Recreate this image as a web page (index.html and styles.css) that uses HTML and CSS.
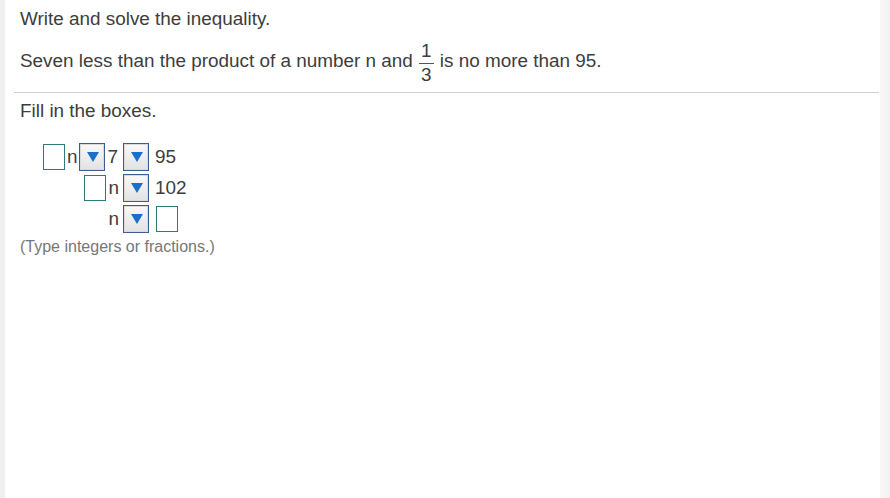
FILE: index.html
```html
<!DOCTYPE html>
<html>
<head>
<meta charset="utf-8">
<link rel="stylesheet" href="styles.css">
</head>
<body>
<div class="page">
  <div class="content">
    <p class="line first">Write and solve the inequality.</p>
    <p class="line second">Seven less than the product of a number n and <span class="frac"><span class="num">1</span><span class="den">3</span></span> is no more than 95.</p>
    <hr class="rule">
    <p class="line fill">Fill in the boxes.</p>
    <div class="grid">
      <div class="left"><span class="box"></span><span class="var">n</span><span class="dd first-dd"><span class="tri"></span></span><span class="num7">7</span></div>
      <div class="mid"><span class="dd"><span class="tri"></span></span></div>
      <div class="right">95</div>

      <div class="left"><span class="box"></span><span class="var">n</span></div>
      <div class="mid"><span class="dd"><span class="tri"></span></span></div>
      <div class="right">102</div>

      <div class="left"><span class="var">n</span></div>
      <div class="mid"><span class="dd"><span class="tri"></span></span></div>
      <div class="right"><span class="box"></span></div>
    </div>
    <p class="hint">(Type integers or fractions.)</p>
  </div>
  <div class="sidebar"></div>
</div>
</body>
</html>
```

FILE: styles.css
```css
html, body {
  margin: 0;
  padding: 0;
  background: #fff;
}
body {
  font-family: "Liberation Sans", Arial, sans-serif;
  color: #3d3d3d;
  font-size: 18.9px;
}
.page {
  display: flex;
  height: 498px;
  border-left: 5px solid #f0f0f0;
}
.content {
  flex: 1;
  padding-left: 9px;
  padding-right: 1px;
}
.sidebar {
  width: 10px;
  background: linear-gradient(to right, #f8f8f8, #f1f1f1);
}
.line {
  margin: 0;
  padding-left: 6px;
  line-height: 22px;
}
.first {
  padding-top: 8px;
}
.second {
  margin-top: 11px;
}
.frac {
  display: inline-flex;
  flex-direction: column;
  align-items: center;
  vertical-align: 10px;
  margin: 0 1px 0 1px;
}
.frac .num {
  line-height: 19px;
  padding: 0 2px 3px;
  border-bottom: 1px solid #555;
}
.frac .den {
  line-height: 19px;
  padding-top: 1px;
}
.rule {
  margin: 8px 0 0 0;
  border: 0;
  border-top: 1px solid #cfcfcf;
  height: 0;
}
.fill {
  margin-top: 7px;
}
.grid {
  display: grid;
  grid-template-columns: 99px 36px auto;
  grid-auto-rows: 31px;
  margin: 19px 0 0 6px;
  align-items: center;
  width: max-content;
  line-height: 22px;
}
.left {
  display: flex;
  align-items: center;
  justify-content: flex-end;
}
.mid {
  display: flex;
  align-items: center;
  padding-left: 4px;
}
.right {
  display: flex;
  align-items: center;
}
.box {
  display: inline-block;
  width: 20px;
  height: 24px;
  border: 1px solid #2d7b78;
  background: #fff;
}
.right .box {
  margin-left: 1px;
}
.var {
  margin-left: 2px;
}
.first-dd {
  margin-left: 2px;
}
.num7 {
  margin: 0 1px 0 2px;
}
.dd {
  display: inline-flex;
  align-items: center;
  justify-content: center;
  width: 24px;
  height: 26px;
  border: 1px solid #3b5d92;
  box-shadow: inset 0 0 0 1px #dadada;
  background: linear-gradient(#f9f9f9, #e2e2e2);
}
.tri {
  width: 0;
  height: 0;
  margin-left: 2px;
  border-left: 6px solid transparent;
  border-right: 6px solid transparent;
  border-top: 10px solid #1b6fcb;
}
.hint {
  margin: 3px 0 0 0;
  padding-left: 6px;
  color: #777;
  font-size: 16px;
  line-height: 20px;
}
```
